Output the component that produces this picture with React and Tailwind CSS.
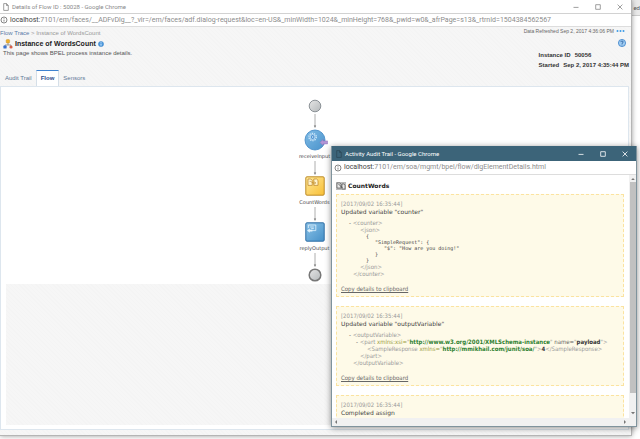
const TABS = ["Audit Trail", "Flow", "Sensors"]

const PAGE_URL = {
  host: "localhost:",
  path: "7101/em/faces/__ADFvDlg__?_vir=/em/faces/adf.dialog-request&loc=en-US&_minWidth=1024&_minHeight=768&_pwid=w0&_afrPage=s13&_rtrnId=1504384562567",
}

const POPUP_URL = {
  host: "localhost:",
  path: "7101/em/soa/mgmt/bpel/flow/dlgElementDetails.html",
}

// ── Window chrome ──

function PageIcon({ className }) {
  return (
    <svg viewBox="0 0 6 8" className={className} fill="none" stroke="currentColor" strokeWidth="0.7">
      <path d="M0.7 0.6h2.9l1.7 1.8v5H0.7z" />
      <path d="M3.5 0.7v1.8h1.7" />
    </svg>
  )
}

function InfoIcon() {
  return (
    <svg viewBox="0 0 8 8" className="w-2 h-2 shrink-0 text-[#555]" fill="none" stroke="currentColor" strokeWidth="0.7">
      <circle cx="4" cy="4" r="3" />
      <path d="M4 3.6v2M4 2.2v0.7" />
    </svg>
  )
}

function WindowButtons({ className }) {
  return (
    <div className={className}>
      <button aria-label="Minimize" className="w-[22px] flex justify-center">
        <svg viewBox="0 0 6 6" className="w-1.5 h-1.5" fill="none" stroke="currentColor" strokeWidth="0.8"><path d="M0.5 3.4h5" /></svg>
      </button>
      <button aria-label="Maximize" className="w-[22px] flex justify-center">
        <svg viewBox="0 0 6 6" className="w-1.5 h-1.5" fill="none" stroke="currentColor" strokeWidth="0.8"><path d="M0.7 0.7h4.6v4.6H0.7z" /></svg>
      </button>
      <button aria-label="Close" className="w-[22px] flex justify-center">
        <svg viewBox="0 0 6 6" className="w-1.5 h-1.5" fill="none" stroke="currentColor" strokeWidth="0.8"><path d="M0.6 0.6l4.8 4.8M5.4 0.6L0.6 5.4" /></svg>
      </button>
    </div>
  )
}

function AddressBar({ url, className }) {
  return (
    <div className={className}>
      <InfoIcon />
      <p className="whitespace-nowrap text-[#8c8c8c]">
        <span className="text-[#444]">{url.host}</span>{url.path}
      </p>
    </div>
  )
}

// ── Flow diagram ──

function Arrow() {
  return (
    <svg viewBox="0 0 6 16" className="w-1.5 h-4" fill="none">
      <path d="M3 1v12" stroke="#9a9a9a" strokeWidth="0.8" />
      <path d="M1.8 12.4h2.4L3 15z" fill="#777" />
    </svg>
  )
}

function Terminal({ end }) {
  return (
    <svg viewBox="0 0 14 14" className="w-3.5 h-3.5">
      <defs>
        <linearGradient id="terminal" x1="0" y1="0" x2="1" y2="1">
          <stop offset="0" stopColor="#e6e6e6" />
          <stop offset="1" stopColor="#b4b8ba" />
        </linearGradient>
      </defs>
      <circle cx="7" cy="7" r="5.8" fill="url(#terminal)" stroke={end ? "#777" : "#8b9196"} strokeWidth={end ? 1.5 : 1} />
    </svg>
  )
}

function ReceiveIcon() {
  return (
    <svg viewBox="0 0 24 22" className="w-6 h-[22px] ml-0.5">
      <defs>
        <linearGradient id="receive" x1="0" y1="0" x2="1" y2="1">
          <stop offset="0" stopColor="#7fbbe6" />
          <stop offset="1" stopColor="#4a93cb" />
        </linearGradient>
      </defs>
      <circle cx="11" cy="11" r="10" fill="url(#receive)" stroke="#3f86c4" strokeWidth="0.8" />
      <circle cx="8.6" cy="8" r="3.7" fill="none" stroke="#cde7fa" strokeWidth="1.3" strokeDasharray="1.4 0.9" />
      <circle cx="8.6" cy="8" r="2.4" fill="#4a90d0" stroke="#e3f2fd" strokeWidth="0.7" />
      <circle cx="8.6" cy="8" r="0.8" fill="#e3f2fd" />
      <path d="M16 13.4l3-3v1.5h4.6v3H19v1.5z" fill="#b295d6" stroke="#8f72b8" strokeWidth="0.5" />
    </svg>
  )
}

function AssignIcon() {
  return (
    <svg viewBox="0 0 20 20" className="w-5 h-5">
      <defs>
        <linearGradient id="assign" x1="0" y1="0" x2="1" y2="1">
          <stop offset="0" stopColor="#ffe89a" />
          <stop offset="1" stopColor="#f8bf35" />
        </linearGradient>
      </defs>
      <rect x="0.8" y="0.8" width="18.4" height="18.4" rx="1.2" fill="url(#assign)" stroke="#bd8c29" strokeWidth="1" />
      <path d="M3 3h2.8L7.2 4.4V9.4H3zM8.8 3h2.8L13 4.4v5H8.8z" fill="#fff3cc" stroke="#b98325" strokeWidth="0.7" />
      <path d="M4.6 5.4c2-0.6 2.2 2.4 5.8 1.6M9.4 5.8l1.4 1.1-1.4 1.2" fill="none" stroke="#b98325" strokeWidth="0.6" />
    </svg>
  )
}

function ReplyIcon() {
  return (
    <svg viewBox="0 0 20 20" className="w-5 h-5">
      <defs>
        <linearGradient id="reply" x1="0" y1="0" x2="1" y2="1">
          <stop offset="0" stopColor="#8cc3e8" />
          <stop offset="1" stopColor="#4590c8" />
        </linearGradient>
      </defs>
      <rect x="0.8" y="0.8" width="18.4" height="18.4" rx="1.2" fill="url(#reply)" stroke="#2f6ea5" strokeWidth="1" />
      <path d="M3.4 6V3h7.4v5.6H6.6M5.2 5h3.6M6.2 6.6h2.6" fill="none" stroke="#e2f2fc" strokeWidth="0.8" />
      <path d="M2 8.6l2.8-2.2v1.4h2.6v1.6H4.8v1.4z" fill="#e2f2fc" />
    </svg>
  )
}

function FlowDiagram() {
  return (
    <div className="flex flex-col items-center pt-3 pb-0.5 text-[5px] leading-[8px] text-[#444] font-['DejaVu_Sans',sans-serif]">
      <Terminal />
      <Arrow />
      <ReceiveIcon />
      <p className="pt-px">receiveInput</p>
      <Arrow />
      <AssignIcon />
      <p className="pt-0.5">CountWords</p>
      <Arrow />
      <ReplyIcon />
      <p className="pt-0.5">replyOutput</p>
      <Arrow />
      <Terminal end />
    </div>
  )
}

// ── Page header ──

function InstanceIcon() {
  return (
    <svg viewBox="0 0 10 10" className="w-2.5 h-2.5 shrink-0">
      <path d="M5 4v2M2 7.5V6h6v1.5" fill="none" stroke="#777" strokeWidth="0.7" />
      <rect x="3.2" y="0.6" width="3.4" height="3.4" rx="0.8" fill="#efb32c" stroke="#c07f19" strokeWidth="0.4" />
      <rect x="0.4" y="6.6" width="3.2" height="3" rx="0.6" fill="#3971cf" />
      <circle cx="8" cy="8" r="1.6" fill="#d8604a" />
    </svg>
  )
}

function PageHeader() {
  return (
    <div className="flex justify-between">
      <div>
        <p className="text-[6px] leading-[10px] pt-px text-[#999]">
          <a href="#trace" className="text-[#5a7ba8]">Flow Trace</a> &gt; Instance of WordsCount
        </p>
        <div className="flex items-center gap-0.5 pl-[3px] pt-px">
          <InstanceIcon />
          <h1 className="text-[7px] leading-[10px] font-bold text-[#222]">Instance of WordsCount</h1>
          <svg viewBox="0 0 6 6" className="w-1.5 h-1.5">
            <circle cx="3" cy="3" r="2.6" fill="#4d9be0" stroke="#2c74bd" strokeWidth="0.4" />
            <path d="M3 2.6v2M3 1.2v0.7" stroke="#fff" strokeWidth="0.8" />
          </svg>
        </div>
        <p className="pl-[3px] text-[6px] leading-[8px] text-[#555]">This page shows BPEL process instance details.</p>
      </div>

      <div className="flex flex-col items-end">
        <p className="flex items-center gap-0.5 pr-1 text-[5px] leading-[8px] text-[#666]">
          Data Refreshed Sep 2, 2017 4:36:06 PM
          <svg viewBox="0 0 9 4" className="w-[9px] h-1" fill="#3b9be6">
            <circle cx="1.5" cy="2" r="1" /><circle cx="4.5" cy="2" r="1" /><circle cx="7.5" cy="2" r="1" />
          </svg>
        </p>
        <button aria-label="Help" className="mt-1 pr-[3px]">
          <svg viewBox="0 0 8 8" className="w-2 h-2" fill="none">
            <circle cx="4" cy="4" r="3.6" fill="#9fccf2" stroke="#2a76c4" strokeWidth="0.7" />
            <path d="M2.9 3.1c0-1.5 2.3-1.4 2.2 0C5 3.9 4 3.9 4 4.9M4 5.6v0.7" stroke="#174e94" strokeWidth="0.8" />
          </svg>
        </button>
        <dl className="mt-[3px] text-[6px] leading-[10px] text-[#333] font-bold">
          <div className="flex gap-1"><dt>Instance ID</dt><dd>50056</dd></div>
          <div className="flex gap-1"><dt>Started</dt><dd>Sep 2, 2017 4:35:44 PM</dd></div>
        </dl>
      </div>
    </div>
  )
}

// ── Audit trail popup ──

function Attr({ children }) {
  return <b className="text-[#2d8030]">{children}</b>
}

function CounterDetails() {
  return (
    <div className="text-[#999]">
      <p className="pl-2"><span className="text-[#555]">- </span>&lt;counter&gt;</p>
      <p className="pl-[19px]">&lt;json&gt;</p>
      <pre className="pl-[25px] text-[5px] leading-[6px] text-[#444] font-['DejaVu_Sans_Mono',monospace]">{`{
   "SimpleRequest": {
      "$": "How are you doing!"
   }
}`}</pre>
      <p className="pl-[19px]">&lt;/json&gt;</p>
      <p className="pl-3">&lt;/counter&gt;</p>
    </div>
  )
}

function OutputDetails() {
  return (
    <div className="text-[#999]">
      <p className="pl-2"><span className="text-[#555]">- </span>&lt;outputVariable&gt;</p>
      <p className="pl-[15px]">
        <span className="text-[#555]">- </span>&lt;part <span className="text-[#999a3c]">xmlns:xsi=</span>"<Attr>http://www.w3.org/2001/XMLSchema-instance</Attr>" <span className="text-[#666]">name=</span>"<b className="text-[#333]">payload</b>"&gt;
      </p>
      <p className="pl-[26px]">
        &lt;SampleResponse <span className="text-[#999a3c]">xmlns=</span>"<Attr>http://mmikhail.com/junit/soa/</Attr>"&gt;<b className="text-[#333]">4</b>&lt;/SampleResponse&gt;
      </p>
      <p className="pl-[19px]">&lt;/part&gt;</p>
      <p className="pl-3">&lt;/outputVariable&gt;</p>
    </div>
  )
}

const ENTRIES = [
  { time: "[2017/09/02 16:35:44]", title: 'Updated variable "counter"', details: CounterDetails },
  { time: "[2017/09/02 16:35:44]", title: 'Updated variable "outputVariable"', details: OutputDetails },
  { time: "[2017/09/02 16:35:44]", title: 'Completed assign', details: null },
]

function AuditEntry({ entry }) {
  const Details = entry.details
  return (
    <div className="bg-[#fefae8] border border-dashed border-[#fbe3a0] px-1 pt-[5px] pb-[3px] text-[6px] leading-[8px] font-['DejaVu_Sans_Condensed','DejaVu_Sans',sans-serif]">
      <p className="text-[#999]">{entry.time}</p>
      <p className="text-[#444] font-['DejaVu_Sans',sans-serif]">{entry.title}</p>
      {Details && (
        <div className="pt-[3px] leading-[7px] whitespace-nowrap">
          <Details />
          <a href="#copy" className="inline-block mt-2 leading-[8px] underline text-[#666]">Copy details to clipboard</a>
        </div>
      )}
    </div>
  )
}

function AuditTrailWindow() {
  return (
    <section className="absolute right-[3px] top-[146px] z-20 w-[306px] h-[281px] flex flex-col bg-white border border-t-0 border-[#7f939d] shadow-[0_1px_6px_rgba(0,0,0,0.45)] font-[Roboto,sans-serif]">
      <header className="h-[15px] shrink-0 flex items-center bg-[#3c6479] text-white text-[6px]">
        <PageIcon className="w-1.5 h-2 ml-1 text-[#2b4655]" />
        <h2 className="ml-[3px]">Activity Audit Trail - Google Chrome</h2>
        <WindowButtons className="flex ml-auto" />
      </header>
      <AddressBar url={POPUP_URL} className="h-3.5 shrink-0 flex items-center gap-0.5 pl-0.5 text-[7px] border-b border-[#ddd]" />

      <div className="flex-1 min-h-0 flex">
        <div className="flex-1 min-w-0 flex flex-col overflow-hidden pl-1 pr-[5px] font-['DejaVu_Sans',sans-serif]">
          <div className="flex items-center gap-0.5 h-[19px] shrink-0 pt-0.5">
            <svg viewBox="0 0 10 8" className="w-2.5 h-2">
              <rect width="10" height="8" fill="#b9b9b9" />
              <path d="M1 1h3l1 1v4H1zM6 2h2l1 1v4H6z" fill="#e8e8e8" stroke="#444" strokeWidth="0.6" />
              <path d="M2.5 2l4 4" stroke="#333" strokeWidth="0.7" />
            </svg>
            <h3 className="text-[6px] font-bold text-[#222]">CountWords</h3>
          </div>
          <div className="flex flex-col gap-[9px]">
            {ENTRIES.map(entry => <AuditEntry key={entry.title} entry={entry} />)}
          </div>
        </div>

        {/* Vertical scrollbar */}
        <div className="w-[7px] flex flex-col items-center bg-[#f1f1f1] text-[#777]">
          <svg viewBox="0 0 6 7" className="w-1.5 h-[7px]" fill="currentColor"><path d="M1.2 5L3 3l1.8 2z" /></svg>
          <div className="w-1.5 flex-1 bg-[#c1c1c1]" />
          <svg viewBox="0 0 6 6" className="w-1.5 h-1.5 mt-[17px] mb-0.5" fill="currentColor"><path d="M1 2l2 2.2L5 2z" /></svg>
        </div>
      </div>

      {/* Horizontal scrollbar */}
      <div className="h-2 shrink-0 flex items-center justify-between pl-px pr-2 bg-[#f1f1f1] text-[#777]">
        <svg viewBox="0 0 6 6" className="w-1.5 h-1.5" fill="currentColor"><path d="M4 1L2 3l2 2z" /></svg>
        <svg viewBox="0 0 6 6" className="w-1.5 h-1.5" fill="currentColor"><path d="M2 1l2 2-2 2z" /></svg>
      </div>
    </section>
  )
}

function App() {
  return (
    <div className="relative min-h-screen flex overflow-hidden bg-white font-[Roboto,sans-serif]">
      <main className="flex-1 min-w-0 flex flex-col mb-[3px] bg-white border-r border-b border-[#b5b5b5] shadow-[0_0_5px_rgba(0,0,0,0.4)] z-10">
        <header className="h-3.5 shrink-0 flex items-center border-b border-[#d2d2d2] text-[6px] text-[#888]">
          <PageIcon className="w-1.5 h-2 ml-[3px] text-[#777]" />
          <h2 className="ml-[3px]">Details of Flow ID : 50028 - Google Chrome</h2>
          <WindowButtons className="flex ml-auto" />
        </header>
        <AddressBar url={PAGE_URL} className="h-[13px] shrink-0 flex items-center gap-0.5 text-[7px] border-b border-[#ddd]" />

        <div className="flex-1 flex flex-col pr-0.5 pb-[5px] bg-[#f5f5f5] bg-[repeating-linear-gradient(45deg,#f4f4f4_0px,#f4f4f4_1px,#f6f6f6_1px,#f6f6f6_3px)] font-['Liberation_Sans',sans-serif]">
          <PageHeader />

          {/* Tabs */}
          <nav className="flex mt-auto pl-px text-[6px]">
            {TABS.map(tab => (
              <button
                key={tab}
                className={tab === "Flow"
                  ? "h-4 px-1 border-t border-x border-t-[#3f83d0] border-x-[#d5dfe8] bg-white text-[#2c4f8c] font-bold"
                  : "h-4 px-1 text-[#5f7896]"}
              >
                {tab}
              </button>
            ))}
          </nav>

          <div className="h-[344px] flex flex-col bg-white border border-[#dde6ee] px-[5px] pb-1">
            <FlowDiagram />
            <div className="flex-1 bg-[#f5f5f5] bg-[repeating-linear-gradient(45deg,#f4f4f4_0px,#f4f4f4_1px,#f6f6f6_1px,#f6f6f6_3px)]" />
          </div>
        </div>
      </main>

      {/* Window behind */}
      <aside className="w-2 bg-white">
        <p className="h-4 overflow-hidden bg-[#e9e9e9] border-b border-[#ccc] text-[6px] leading-[16px] text-right text-[#555]">ed</p>
      </aside>

      <AuditTrailWindow />
    </div>
  )
}

export default App
